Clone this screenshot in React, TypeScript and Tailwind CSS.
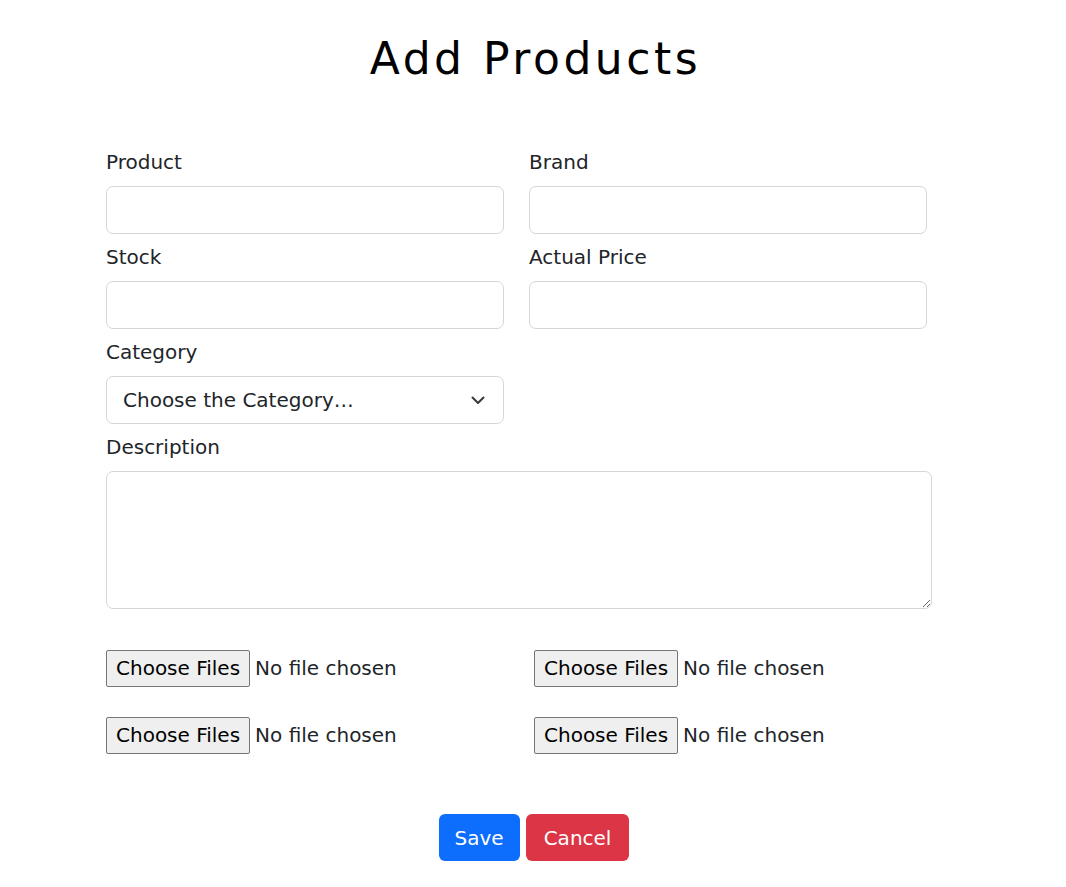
import React from "react";

const font = { fontFamily: '"DejaVu Sans", "Liberation Sans", sans-serif' };

function Field({ label, children }: { label: string; children: React.ReactNode }) {
  return (
    <div className="flex flex-col">
      <label className="text-[20px] leading-[30px] text-[#212529] mb-[9px]">{label}</label>
      {children}
    </div>
  );
}

function TextInput() {
  return (
    <input
      type="text"
      className="h-[48px] w-full rounded-[7px] border border-[#d3d6da] bg-white px-[16px] text-[20px] text-[#212529] outline-none"
    />
  );
}

function FileInput() {
  return (
    <div className="flex items-center h-[38px]">
      <span className="h-[37px] flex items-center rounded-[2px] border border-[#767676] bg-[#efefef] px-[9px] text-[20px] text-black">
        Choose Files
      </span>
      <span className="ml-[5px] text-[20px] text-[#212529]">No file chosen</span>
    </div>
  );
}

export default function App() {
  return (
    <div className="min-h-screen bg-white" style={font}>
      <h1 className="pt-[37px] pl-[5px] text-center text-[44px] leading-[43px] tracking-[0.08em] text-black font-normal">
        Add Products
      </h1>
      <div className="ml-[106px] w-[826px] mt-[67px]">
        <div className="grid grid-cols-[398px_398px] gap-x-[25px] gap-y-[8px]">
          <Field label="Product">
            <TextInput />
          </Field>
          <Field label="Brand">
            <TextInput />
          </Field>
          <Field label="Stock">
            <TextInput />
          </Field>
          <Field label="Actual Price">
            <TextInput />
          </Field>
          <Field label="Category">
            <div className="relative h-[48px] w-full rounded-[7px] border border-[#d3d6da] bg-white flex items-center pl-[16px] text-[20px] text-[#212529]">
              <span>Choose the Category…</span>
              <svg
                className="absolute right-[18px] top-1/2 -translate-y-1/2"
                width="14"
                height="10"
                viewBox="0 0 14 10"
                fill="none"
              >
                <path d="M1.5 2.5 L7 8 L12.5 2.5" stroke="#343a40" strokeWidth="2" strokeLinecap="round" strokeLinejoin="round" />
              </svg>
            </div>
          </Field>
        </div>
        <div className="mt-[8px]">
          <Field label="Description">
            <textarea className="block h-[138px] w-[826px] rounded-[7px] border border-[#d3d6da] bg-white px-[16px] py-[8px] text-[20px] outline-none" />
          </Field>
        </div>
        <div className="mt-[40px] grid grid-cols-[428px_428px] gap-y-[29px]">
          <FileInput />
          <FileInput />
          <FileInput />
          <FileInput />
        </div>
      </div>
      <div className="mt-[60px] pl-[2px] flex justify-center gap-[6px]">
        <button className="h-[47px] rounded-[6px] bg-[#0d6efd] px-[16px] text-[20px] text-white">Save</button>
        <button className="h-[47px] rounded-[6px] bg-[#dc3545] px-[18px] text-[20px] text-white">Cancel</button>
      </div>
    </div>
  );
}
